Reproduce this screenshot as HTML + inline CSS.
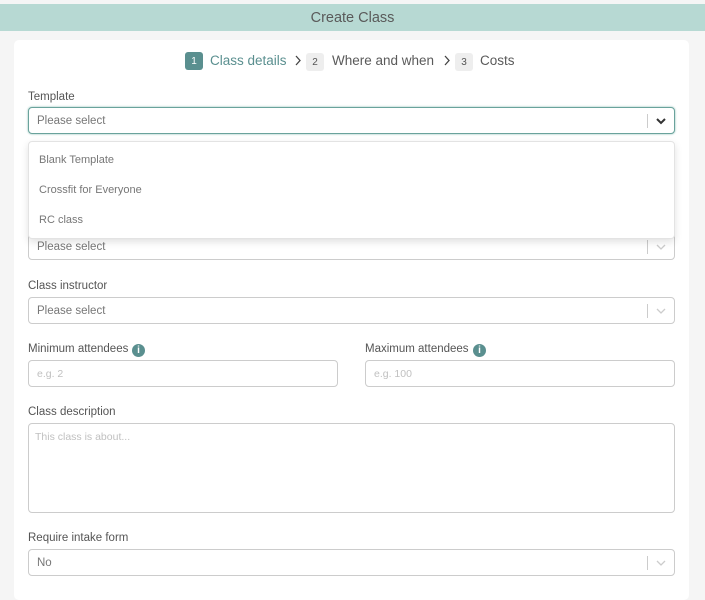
<!DOCTYPE html>
<html><head><meta charset="utf-8"><style>
*{box-sizing:border-box;margin:0;padding:0}
body{width:705px;height:589px;overflow:hidden;background:#f5f5f5;font-family:"Liberation Sans",sans-serif;position:relative;color:#555}
.a{position:absolute}
.hdr{left:0;top:4px;width:705px;height:27px;background:#b7d9d3;text-align:center;font-size:14.5px;line-height:28px;color:#5a5a5a}
.card{left:14px;top:40px;width:675px;height:560px;background:#fff;border-radius:5px}
.badge{width:18px;height:18px;border-radius:3px;font-size:10px;line-height:19px;text-align:center}
.st{font-size:13.5px;line-height:18px;color:#5a5a5a}
.lbl{font-size:11.5px;color:#555;left:28px}
.box{border:1px solid #ccc;border-radius:4px;background:#fff;height:27px;font-size:11.5px;line-height:27px;padding-left:8px;color:#777}
.ph{color:#c0c0c0}
.sep{position:absolute;right:26px;top:6px;width:1px;height:14px;background:#ccc}
.chev{position:absolute;right:7px;top:7px}
.it{font-size:11px;color:#777;left:10px;position:absolute}
.info{width:13px;height:13px;border-radius:50%;background:#5a8f8f;color:#fff;font-size:10px;font-weight:bold;text-align:center;line-height:13px}
</style></head><body>
<div class="a hdr">Create Class</div>
<div class="a card"></div>
<div class="a badge" style="left:185px;top:52px;background:#5a8f8f;color:#fff">1</div>
<div class="a st" style="left:210px;top:52px;color:#5a8f8f">Class details</div>
<svg class="a" style="left:294px;top:55px" width="8" height="11" viewBox="0 0 8 11"><path d="M2 1l4 4.5L2 10" stroke="#444" stroke-width="1.3" fill="none"/></svg>
<div class="a badge" style="left:306px;top:53px;background:#eee;color:#555">2</div>
<div class="a st" style="left:332px;top:52px">Where and when</div>
<svg class="a" style="left:443px;top:55px" width="8" height="11" viewBox="0 0 8 11"><path d="M2 1l4 4.5L2 10" stroke="#444" stroke-width="1.3" fill="none"/></svg>
<div class="a badge" style="left:455px;top:53px;background:#eee;color:#555">3</div>
<div class="a st" style="left:480px;top:52px">Costs</div>

<div class="a lbl" style="top:91px">Template</div>
<div class="a box" style="left:28px;top:107px;width:647px;border-color:#6aa39c;box-shadow:0 0 2px #8cbcb5">Please select<div class="sep"></div><svg class="chev" width="12" height="12" viewBox="0 0 12 12"><path d="M2 4l4 4 4-4" stroke="#333" stroke-width="2" fill="none"/></svg></div>

<div class="a box" style="left:28px;top:233px;width:647px">Please select<div class="sep"></div><svg class="chev" width="12" height="12" viewBox="0 0 12 12"><path d="M2 4l4 4 4-4" stroke="#ccc" stroke-width="1.3" fill="none"/></svg></div>

<div class="a" style="left:28px;top:141px;width:647px;height:98px;background:#fff;border:1px solid #e3e3e3;border-radius:4px;box-shadow:0 3px 8px rgba(0,0,0,.12)">
<div class="it" style="top:12px">Blank Template</div>
<div class="it" style="top:42px">Crossfit for Everyone</div>
<div class="it" style="top:72px">RC class</div>
</div>

<div class="a lbl" style="top:280px">Class instructor</div>
<div class="a box" style="left:28px;top:297px;width:647px">Please select<div class="sep"></div><svg class="chev" width="12" height="12" viewBox="0 0 12 12"><path d="M2 4l4 4 4-4" stroke="#ccc" stroke-width="1.3" fill="none"/></svg></div>

<div class="a lbl" style="top:343px">Minimum attendees</div>
<div class="a info" style="left:132px;top:344px">i</div>
<div class="a lbl" style="top:343px;left:365px">Maximum attendees</div>
<div class="a info" style="left:473px;top:344px">i</div>
<div class="a box ph" style="left:28px;top:360px;width:310px;font-size:10.5px">e.g. 2</div>
<div class="a box ph" style="left:365px;top:360px;width:310px;font-size:10.5px">e.g. 100</div>

<div class="a lbl" style="top:406px">Class description</div>
<div class="a box ph" style="left:28px;top:423px;width:647px;height:90px;line-height:26px;padding-left:6px;font-size:10.5px">This class is about...</div>

<div class="a lbl" style="top:532px">Require intake form</div>
<div class="a box" style="left:28px;top:549px;width:647px">No<div class="sep"></div><svg class="chev" width="12" height="12" viewBox="0 0 12 12"><path d="M2 4l4 4 4-4" stroke="#ccc" stroke-width="1.3" fill="none"/></svg></div>
</body></html>
